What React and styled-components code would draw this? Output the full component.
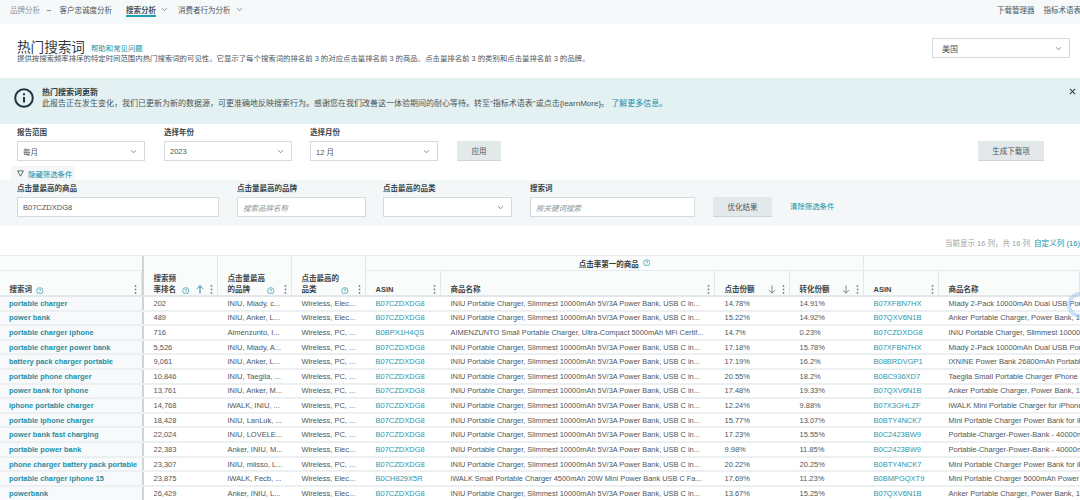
import React from "react";
import styled, { createGlobalStyle } from "styled-components";

const GlobalStyle = createGlobalStyle`
  html, body {
    margin: 0;
    padding: 0;
    width: 1080px;
    height: 500px;
    overflow: hidden;
    background: #fff;
    font-family: "Liberation Sans", "Noto Sans CJK SC", sans-serif;
    color: #333f45;
  }
`;

const Page = styled.div`
  position: relative;
  width: 1080px;
  height: 500px;
  overflow: hidden;
`;

const Nav = styled.nav`
  height: 24px;
  background: #f5f9fa;
  display: flex;
  align-items: flex-start;
  padding: 0 0 0 10px;
  font-size: 7.5px;
  box-sizing: border-box;
  white-space: nowrap;
`;

const NavItem = styled.span`
  height: ${(p) => (p.$active ? 17 : 19)}px;
  display: flex;
  align-items: center;
  margin-right: ${(p) => p.$gap || 0}px;
  color: ${(p) => (p.$muted ? "#8a9499" : "#4a555a")};
  font-weight: ${(p) => (p.$active ? 700 : 400)};
  box-sizing: border-box;
  border-bottom: ${(p) => (p.$active ? "2px solid #1b9fb0" : "none")};
  padding-top: ${(p) => (p.$active ? "4px" : "0")};
`;

const NavRight = styled.div`
  margin-left: auto;
  display: flex;
  height: 19px;
  align-items: center;
  gap: 9px;
  width: 83px;
  flex-shrink: 0;
  overflow: hidden;
  color: #4a555a;
`;

const TitleBar = styled.header`
  height: 54px;
  padding: 16px 10px 0 17px;
  box-sizing: border-box;
  display: flex;
  justify-content: space-between;
`;

const TitleRow = styled.div`
  display: flex;
  align-items: center;
  gap: 6px;
  height: 15px;
`;

const Title = styled.h1`
  margin: 0;
  font-size: 13.6px;
  line-height: 15px;
  font-weight: 400;
  color: #2f3b40;
`;

const Link = styled.a`
  color: #1b8fa3;
  font-size: 7.4px;
  white-space: nowrap;
`;

const BannerLink = styled(Link)`
  font-size: 8px;
`;

const ClearLink = styled(Link)`
  margin-left: 18px;
  margin-bottom: 6px;
`;

const Desc = styled.p`
  margin: -1px 0 0;
  font-size: 7.4px;
  line-height: 10px;
  color: #4a555a;
  white-space: nowrap;
`;

const CountrySelect = styled.div`
  margin-top: -2px;
`;

const Select = styled.div`
  width: ${(p) => p.$w}px;
  height: 20px;
  background: #fff;
  border: 1px solid #d5dbdd;
  box-sizing: border-box;
  display: flex;
  align-items: center;
  justify-content: space-between;
  padding: 0 7px 0 ${(p) => p.$pad || 5}px;
  font-size: ${(p) => p.$size || 7.5}px;
  color: #4a555a;
  flex-shrink: 0;
`;

const Banner = styled.section`
  height: 46px;
  background: #e3f1f3;
  display: flex;
  align-items: flex-start;
  padding: 9px 4px 0 14px;
  box-sizing: border-box;
  gap: 8px;
`;

const BannerIcon = styled.svg`
  flex-shrink: 0;
  margin-top: 1px;
`;

const BannerTitle = styled.div`
  font-size: 8px;
  line-height: 11px;
  font-weight: 700;
  color: #2f3b40;
`;

const BannerText = styled.div`
  font-size: 8px;
  line-height: 11px;
  color: #4a555a;
  white-space: nowrap;
`;

const Close = styled.span`
  margin-left: auto;
  margin-top: 1px;
  display: flex;
`;

const FilterRow = styled.div`
  display: flex;
  align-items: flex-end;
  padding: 0 0 0 17px;
  height: 37px;
  box-sizing: border-box;
`;

const Field = styled.div`
  width: ${(p) => p.$w}px;
  flex-shrink: 0;
`;

const Label = styled.div`
  font-size: 7.5px;
  line-height: 10px;
  margin-bottom: 3px;
  font-weight: 700;
  color: #3a464b;
  white-space: nowrap;
`;

const Button = styled.div`
  width: ${(p) => p.$w}px;
  height: 20px;
  background: #e3e9ea;
  border-bottom: 1px solid #ced5d7;
  box-sizing: border-box;
  display: flex;
  align-items: center;
  justify-content: center;
  font-size: 7.5px;
  color: #4a555a;
  margin-left: ${(p) => p.$ml || 0}px;
  flex-shrink: 0;
`;

const Tab = styled.div`
  margin: 5px 0 0 11px;
  width: 64px;
  height: 14px;
  background: #f3f7f8;
  border-radius: 3px 3px 0 0;
  display: flex;
  align-items: center;
  padding-left: 6px;
  gap: 4px;
  box-sizing: border-box;
  font-size: 7.4px;
  color: #1b8fa3;
  white-space: nowrap;
`;

const FilterPanel = styled.section`
  height: 46px;
  background: #f3f7f8;
`;

const Input = styled.div`
  width: ${(p) => p.$w}px;
  height: 20px;
  background: #fff;
  border: 1px solid #d5dbdd;
  box-sizing: border-box;
  display: flex;
  align-items: center;
  padding: 0 5px;
  font-size: 7.5px;
  color: ${(p) => (p.$ph ? "#8a9499" : "#4a555a")};
  font-style: ${(p) => (p.$ph ? "italic" : "normal")};
`;

const TableInfo = styled.div`
  height: 29px;
  display: flex;
  justify-content: flex-end;
  align-items: flex-end;
  padding: 0 0 7px;
  box-sizing: border-box;
  font-size: 7.5px;
  color: #98a2a6;
  white-space: nowrap;
  gap: 4px;
`;

const InfoLink = styled(Link)`
  font-size: 7.6px;
`;

const HeadTop = styled.div`
  display: flex;
  height: 16px;
  border-top: 1px solid #e8ecee;
  box-sizing: border-box;
  background: #fafbfb;
  font-size: 7.5px;
  font-weight: 700;
`;

const HeadTopCell = styled.div`
  width: ${(p) => p.$w}px;
  flex-shrink: 0;
  display: flex;
  align-items: center;
  justify-content: center;
  gap: 4px;
  box-sizing: border-box;
  border-right: ${(p) => (p.$line ? "1px solid #e3e7e9" : "none")};
  border-bottom: ${(p) => (p.$bottom ? "1px solid #e8ecee" : "none")};
`;

const HeadBottom = styled.div`
  display: flex;
  height: 26px;
  background: #fafbfb;
  border-bottom: 2px solid #e3e7e9;
  box-sizing: border-box;
`;

const HeadCell = styled.div`
  width: ${(p) => p.$w}px;
  flex-shrink: 0;
  box-sizing: border-box;
  display: flex;
  align-items: flex-end;
  padding: 0 4.5px 0 9.5px;
  font-size: 7.5px;
  line-height: 11px;
  font-weight: 700;
  color: #3a464b;
  border-right: 1px solid #e3e7e9;
`;

const HeadLabel = styled.span`
  flex: 1;
  min-width: 0;
  white-space: nowrap;
  display: flex;
  align-items: flex-end;
  gap: 4px;
`;

const Divider = styled.div`
  width: 2px;
  flex-shrink: 0;
  align-self: stretch;
  background: #cfd4d6;
`;

const Row = styled.div`
  display: flex;
  height: 14.62px;
  border-bottom: 2px solid #edf0f1;
  box-sizing: border-box;
  font-size: 7.5px;
  align-items: center;
  white-space: nowrap;
`;

const Term = styled.div`
  width: 142px;
  height: 100%;
  flex-shrink: 0;
  padding-left: 9px;
  box-sizing: border-box;
  display: flex;
  align-items: center;
  font-size: 7.4px;
  font-weight: 700;
  color: #1f8ea3;
  background: #f8f9fa;
`;

const Cell = styled.div`
  width: ${(p) => p.$w}px;
  flex-shrink: 0;
  padding-left: 9.5px;
  box-sizing: border-box;
  overflow: hidden;
  font-size: ${(p) => p.$size || 7.5}px;
  color: ${(p) => (p.$link ? "#2a97ad" : "#4d575c")};
`;

const Ring = styled.div`
  position: absolute;
  left: 1067px;
  top: 292px;
  width: 26px;
  height: 26px;
  border-radius: 50%;
  border: 4px solid rgba(130, 185, 235, 0.4);
  box-sizing: border-box;
`;

const ChevronSvg = styled.svg`
  flex-shrink: 0;
  margin-left: ${(p) => p.$ml || 0}px;
  margin-right: ${(p) => p.$mr || 0}px;
`;

const Chevron = ({ ml, mr }) => (
  <ChevronSvg $ml={ml} $mr={mr} width="7" height="7" viewBox="0 0 10 10" fill="none" stroke="#6d787d" strokeWidth="1.2">
    <path d="M1.5 3.2 5 6.8l3.5-3.6" />
  </ChevronSvg>
);

const HelpSvg = styled.svg`
  flex-shrink: 0;
  margin-bottom: 1px;
`;

const Help = () => (
  <HelpSvg width="7.5" height="7.5" viewBox="0 0 12 12" fill="none" stroke="#1f8ea3" strokeWidth="1">
    <circle cx="6" cy="6" r="5" />
    <path d="M4.4 4.8C4.4 3.2 7.6 3.2 7.6 4.8 7.6 6 6 5.9 6 7.2M6 8.2v1" />
  </HelpSvg>
);

const DotsSvg = styled.svg`
  flex-shrink: 0;
  margin-bottom: 1px;
  margin-left: ${(p) => p.$ml || 0}px;
`;

const Dots = ({ ml }) => (
  <DotsSvg $ml={ml} width="3" height="9" viewBox="0 0 3 9" fill="#7c878c">
    <circle cx="1.5" cy="1" r="0.9" />
    <circle cx="1.5" cy="4.5" r="0.9" />
    <circle cx="1.5" cy="8" r="0.9" />
  </DotsSvg>
);

const ArrowSvg = styled.svg`
  flex-shrink: 0;
  margin: 0 6px 1px ${(p) => p.$ml || 0}px;
`;

const Arrow = ({ up, color, ml }) => (
  <ArrowSvg $ml={ml} width="8" height="9" viewBox="0 0 8 9" fill="none" stroke={color} strokeWidth="1">
    {up ? <path d="M4 8.5V.8M1 3.8 4 .8l3 3" /> : <path d="M4 .5v7.7M1 5.2l3 3 3-3" />}
  </ArrowSvg>
);

const INIU = "INIU Portable Charger, Slimmest 10000mAh 5V/3A Power Bank, USB C in...";
const ASIN1 = "B07CZDXDG8";
const ANKER = "Anker Portable Charger, Power Bank, 10000mAh";
const MIADY = "Miady 2-Pack 10000mAh Dual USB Portable";
const MINI = "Mini Portable Charger Power Bank for iPhone";
const FOURTY = "Portable-Charger-Power-Bank - 40000mAh";
const WE = "Wireless, Elec...";
const WP = "Wireless, PC, ...";

const rows = [
  ["portable charger", "202", "INIU, Miady, c...", WE, ASIN1, INIU, "14.78%", "14.91%", "B07XFBN7HX", MIADY],
  ["power bank", "489", "INIU, Anker, L...", WE, ASIN1, INIU, "15.22%", "14.92%", "B07QXV6N1B", ANKER],
  ["portable charger iphone", "716", "Aimenzunto, I...", WP, "B0BPX1H4QS", "AIMENZUNTO Small Portable Charger, Ultra-Compact 5000mAh MFi Certif...", "14.7%", "0.23%", ASIN1, "INIU Portable Charger, Slimmest 10000mAh"],
  ["portable charger power bank", "5,526", "INIU, Miady, A...", WP, ASIN1, INIU, "17.18%", "15.78%", "B07XFBN7HX", MIADY],
  ["battery pack charger portable", "9,061", "INIU, Anker, L...", WP, ASIN1, INIU, "17.19%", "16.2%", "B08BRDVGP1", "IXNINE Power Bank 26800mAh Portable"],
  ["portable phone charger", "10,846", "INIU, Taegila, ...", WP, ASIN1, INIU, "20.55%", "18.2%", "B0BC936XD7", "Taegila Small Portable Charger iPhone"],
  ["power bank for iphone", "13,761", "INIU, Anker, M...", WP, ASIN1, INIU, "17.48%", "19.33%", "B07QXV6N1B", ANKER],
  ["iphone portable charger", "14,768", "iWALK, INIU, ...", WP, ASIN1, INIU, "12.24%", "9.88%", "B07X3GHLZF", "iWALK Mini Portable Charger for iPhone"],
  ["portable iphone charger", "18,428", "INIU, LanLuk, ...", WP, ASIN1, INIU, "15.77%", "13.07%", "B0BTY4NCK7", MINI],
  ["power bank fast charging", "22,024", "INIU, LOVELE...", WP, ASIN1, INIU, "17.23%", "15.55%", "B0C2423BW9", FOURTY],
  ["portable power bank", "22,383", "Anker, INIU, M...", WE, ASIN1, INIU, "9.98%", "11.85%", "B0C2423BW9", FOURTY],
  ["phone charger battery pack portable", "23,307", "INIU, miisso, L...", WP, ASIN1, INIU, "20.22%", "20.25%", "B0BTY4NCK7", MINI],
  ["portable charger iphone 15", "23,875", "iWALK, Fecb, ...", WE, "B0CH829X5R", "iWALK Small Portable Charger 4500mAh 20W Mini Power Bank USB C Fa...", "17.69%", "11.23%", "B0BMPGQXT9", "Mini Portable Charger 5000mAh Power"],
  ["powerbank", "26,429", "Anker, INIU, L...", WE, ASIN1, INIU, "13.67%", "15.25%", "B07QXV6N1B", ANKER],
];

export default function App() {
  return (
    <Page>
      <GlobalStyle />
      <Nav>
        <NavItem $muted $gap={5}>品牌分析</NavItem>
        <NavItem $gap={7}>→</NavItem>
        <NavItem $gap={14}>客户忠诚度分析</NavItem>
        <NavItem $active>搜索分析</NavItem>
        <NavItem $gap={10}><Chevron ml={5} /></NavItem>
        <NavItem>消费者行为分析<Chevron ml={5} /></NavItem>
        <NavRight>
          <span>下载管理器</span>
          <span>指标术语表</span>
        </NavRight>
      </Nav>

      <TitleBar>
        <div>
          <TitleRow>
            <Title>热门搜索词</Title>
            <Link>帮助和常见问题</Link>
          </TitleRow>
          <Desc>提供按搜索频率排序的特定时间范围内热门搜索词的可见性。它显示了每个搜索词的排名前 3 的对应点击量排名前 3 的商品、点击量排名前 3 的类别和点击量排名前 3 的品牌。</Desc>
        </div>
        <CountrySelect>
          <Select $w={138} $pad={9} $size={8}>美国 <Chevron /></Select>
        </CountrySelect>
      </TitleBar>

      <Banner>
        <BannerIcon width="20" height="20" viewBox="0 0 20 20" fill="none" stroke="#1f3640" strokeWidth="2">
          <circle cx="10" cy="10" r="8.8" />
          <path d="M10 9v5.5M10 5.2v2" />
        </BannerIcon>
        <div>
          <BannerTitle>热门搜索词更新</BannerTitle>
          <BannerText>
            此报告正在发生变化，我们已更新为新的数据源，可更准确地反映搜索行为。感谢您在我们改善这一体验期间的耐心等待。转至"指标术语表"或点击{"{learnMore}"}。 <BannerLink>了解更多信息。</BannerLink>
          </BannerText>
        </div>
        <Close>
          <svg width="7" height="7" viewBox="0 0 8 8" stroke="#33454d" strokeWidth="1.2"><path d="M1 1l6 6M7 1 1 7" /></svg>
        </Close>
      </Banner>

      <FilterRow>
        <Field $w={147}><Label>报告范围</Label><Select $w={128}>每月 <Chevron /></Select></Field>
        <Field $w={146}><Label>选择年份</Label><Select $w={128}>2023 <Chevron /></Select></Field>
        <Field $w={147}><Label>选择月份</Label><Select $w={128}>12 月 <Chevron /></Select></Field>
        <Button $w={44}>应用</Button>
        <Button $w={66} $ml={477}>生成下载项</Button>
      </FilterRow>

      <Tab>
        <svg width="7" height="7" viewBox="0 0 8 8" fill="none" stroke="#33454d" strokeWidth="0.9"><path d="M.7 1h6.6L4 7z" /></svg>
        隐藏筛选条件
      </Tab>

      <FilterPanel>
        <FilterRow>
          <Field $w={220}><Label>点击量最高的商品</Label><Input $w={202}>B07CZDXDG8</Input></Field>
          <Field $w={146}><Label>点击量最高的品牌</Label><Input $w={129} $ph>搜索品牌名称</Input></Field>
          <Field $w={147}><Label>点击最高的品类</Label><Select $w={129}><span /><Chevron /></Select></Field>
          <Field $w={183}><Label>搜索词</Label><Input $w={165} $ph>按关键词搜索</Input></Field>
          <Button $w={59}>优化结果</Button>
          <ClearLink>清除筛选条件</ClearLink>
        </FilterRow>
      </FilterPanel>

      <TableInfo>
        当前显示 16 列，共 16 列 <InfoLink>自定义列 (16)</InfoLink>
      </TableInfo>

      <HeadTop>
        <HeadTopCell $w={142} $bottom />
        <Divider />
        <HeadTopCell $w={74} $line />
        <HeadTopCell $w={74} $line />
        <HeadTopCell $w={74} $line />
        <HeadTopCell $w={498} $line $bottom>点击率第一的商品 <Help /></HeadTopCell>
        <HeadTopCell $w={216} $bottom />
      </HeadTop>
      <HeadBottom>
        <HeadCell $w={142}><HeadLabel>搜索词 <Help /></HeadLabel><Dots /></HeadCell>
        <Divider />
        <HeadCell $w={74}><HeadLabel>搜索频<br />率排名</HeadLabel><Help /><Arrow up color="#1f8ea3" ml={6} /><Dots /></HeadCell>
        <HeadCell $w={74}><HeadLabel>点击量最高<br />的品牌</HeadLabel><Help /><Dots ml={9} /></HeadCell>
        <HeadCell $w={74}><HeadLabel>点击最高的<br />品类</HeadLabel><Help /><Dots ml={9} /></HeadCell>
        <HeadCell $w={75}><HeadLabel>ASIN</HeadLabel><Dots /></HeadCell>
        <HeadCell $w={274}><HeadLabel>商品名称</HeadLabel><Dots /></HeadCell>
        <HeadCell $w={75}><HeadLabel>点击份额</HeadLabel><Arrow color="#7c878c" /><Dots /></HeadCell>
        <HeadCell $w={74}><HeadLabel>转化份额</HeadLabel><Arrow color="#7c878c" /><Dots /></HeadCell>
        <HeadCell $w={75}><HeadLabel>ASIN</HeadLabel><Dots /></HeadCell>
        <HeadCell $w={141}><HeadLabel>商品名称</HeadLabel></HeadCell>
      </HeadBottom>

      {rows.map((r) => (
        <Row key={r[0]}>
          <Term>{r[0]}</Term>
          <Divider />
          <Cell $w={74}>{r[1]}</Cell>
          <Cell $w={74}>{r[2]}</Cell>
          <Cell $w={74}>{r[3]}</Cell>
          <Cell $w={75} $link>{r[4]}</Cell>
          <Cell $w={274} $size={7.4}>{r[5]}</Cell>
          <Cell $w={75}>{r[6]}</Cell>
          <Cell $w={74}>{r[7]}</Cell>
          <Cell $w={75} $link>{r[8]}</Cell>
          <Cell $w={141}>{r[9]}</Cell>
        </Row>
      ))}
      <Ring />
    </Page>
  );
}
